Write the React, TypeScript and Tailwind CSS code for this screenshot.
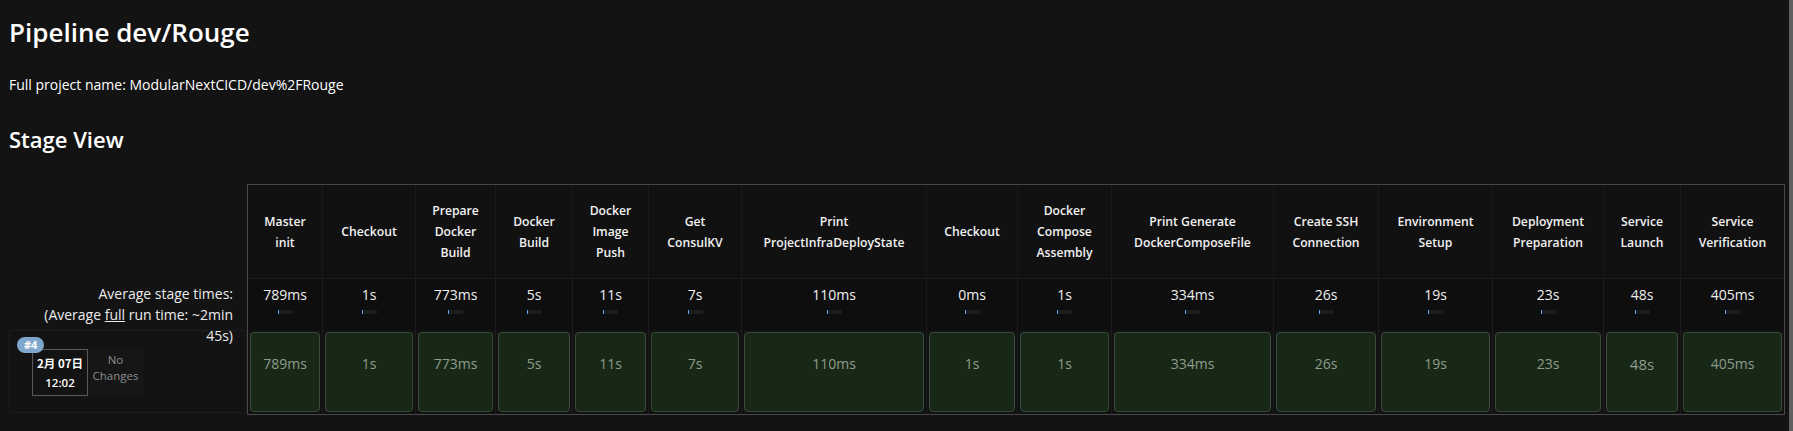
import React from 'react'

type Stage = { name: string[]; avg: string; time: string; w: string; big?: boolean }

const stages: Stage[] = [
  { name: ['Master', 'init'], avg: '789ms', time: '789ms', w: 'w-[75px]' },
  { name: ['Checkout'], avg: '1s', time: '1s', w: 'w-[93px]' },
  { name: ['Prepare', 'Docker', 'Build'], avg: '773ms', time: '773ms', w: 'w-[80px]' },
  { name: ['Docker', 'Build'], avg: '5s', time: '5s', w: 'w-[77px]' },
  { name: ['Docker', 'Image', 'Push'], avg: '11s', time: '11s', w: 'w-[76px]' },
  { name: ['Get', 'ConsulKV'], avg: '7s', time: '7s', w: 'w-[93px]' },
  { name: ['Print', 'ProjectInfraDeployState'], avg: '110ms', time: '110ms', w: 'w-[185px]' },
  { name: ['Checkout'], avg: '0ms', time: '1s', w: 'w-[91px]' },
  { name: ['Docker', 'Compose', 'Assembly'], avg: '1s', time: '1s', w: 'w-[94px]' },
  { name: ['Print Generate', 'DockerComposeFile'], avg: '334ms', time: '334ms', w: 'w-[162px]' },
  { name: ['Create SSH', 'Connection'], avg: '26s', time: '26s', w: 'w-[105px]' },
  { name: ['Environment', 'Setup'], avg: '19s', time: '19s', w: 'w-[114px]' },
  { name: ['Deployment', 'Preparation'], avg: '23s', time: '23s', w: 'w-[111px]' },
  { name: ['Service', 'Launch'], avg: '48s', time: '48s', w: 'w-[77px]', big: true },
  { name: ['Service', 'Verification'], avg: '405ms', time: '405ms', w: 'w-[103px]' },
]

export default function App() {
  return (
    <div className="flex h-[431px] w-full overflow-hidden bg-[#131313] font-['Open_Sans',sans-serif] text-[#e6e6e6]">
      <div className="flex-1 pl-[9px] pt-[15px]">
        <h1 className="text-[26px] font-semibold leading-[34px] text-white">Pipeline dev/Rouge</h1>
        <p className="mt-[27px] text-[14px] leading-[18px] text-white">Full project name: ModularNextCICD/dev%2FRouge</p>
        <h2 className="mt-[31px] text-[22px] font-semibold leading-[28px] text-white">Stage View</h2>

        <div className="mt-[31px] flex">
          <div className="flex w-[238px] flex-col">
            <div className="h-[94px]" />
            <div className="relative z-10 h-[52px] pr-[14px] pt-[5px] text-right text-[14px] leading-[21px] text-[#ececec]">
              Average stage times:
              <br />
              (Average <span className="underline">full</span> run time: ~2min
              <br />
              45s)
            </div>
            <div className="h-[83px] border border-[#1d1d1d] pl-[7px] pt-[6px]">
              <div className="relative flex">
                <span className="absolute left-0 top-0 rounded-full bg-[#7fa6cd] px-[7px] text-[11px] font-bold leading-[16px] text-white">#4</span>
                <div className="ml-[15px] mt-[12px] flex h-[47px] w-[56px] flex-col items-center justify-center gap-[6px] border border-[#5a5a5a] text-[11.5px] font-semibold leading-[14px] text-white">
                  <span className="font-['Noto_Sans_CJK_SC',sans-serif]">2月 07日</span>
                  <span>12:02</span>
                </div>
                <div className="mt-[12px] flex h-[47px] w-[55px] flex-col items-center rounded-r-[4px] bg-[#161616] pt-[3px] text-[11.5px] leading-[16px] text-[#8c8c8c]">
                  <span>No</span>
                  <span>Changes</span>
                </div>
              </div>
            </div>
          </div>

          <div className="flex border border-[#474747] bg-[#101010]">
            {stages.map((s, i) => (
              <div key={i} className={`${s.w} flex flex-col ${i < stages.length - 1 ? 'border-r border-[#1a1a1a]' : ''}`}>
                <div className="flex h-[93px] flex-col items-center justify-center bg-[#111111] text-center text-[12.2px] font-semibold leading-[21px] text-[#f2f2f2]">
                  {s.name.map((n) => (
                    <span key={n} className="whitespace-nowrap">{n}</span>
                  ))}
                </div>
                <div className="flex h-[52px] flex-col items-center border-t border-[#1b1b1b] bg-[#0e0e0e] pt-[6px]">
                  <span className="text-[14px] leading-[20px] text-[#f0f0f0]">{s.avg}</span>
                  <div className="mt-[5px] h-[4px] w-[15px] border-l border-[#6aa1ee] bg-[#1c1c1c]" />
                </div>
                <div className="h-[84px] bg-[#121212] p-[2px]">
                  <div className="flex h-full items-start justify-center rounded-[4px] border border-[#3c4a3b] bg-[#182817] pt-[21px]">
                    <span className={`${s.big ? 'text-[15px]' : 'text-[14px]'} leading-[20px] text-[#8f9c8d]`}>{s.time}</span>
                  </div>
                </div>
              </div>
            ))}
          </div>
        </div>
      </div>
      <div className="w-[4px] bg-[#606060]" />
    </div>
  )
}
